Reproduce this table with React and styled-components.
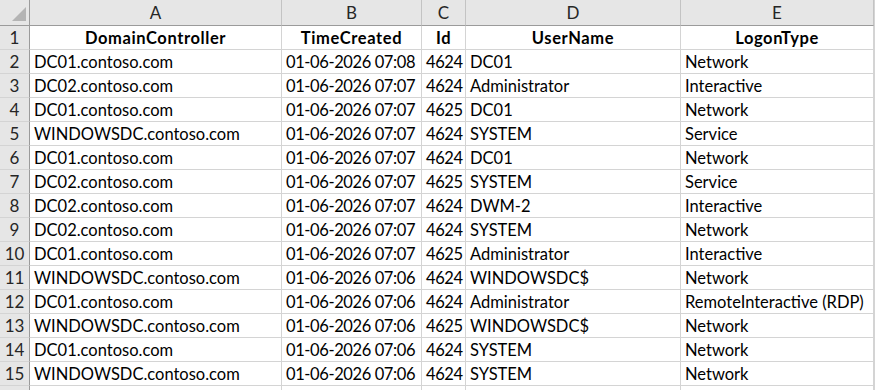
import React from 'react';
import styled, { createGlobalStyle } from 'styled-components';

const GlobalStyle = createGlobalStyle`
  html, body {
    margin: 0;
    padding: 0;
    background: #ffffff;
    overflow: hidden;
  }
`;

const Sheet = styled.div`
  display: grid;
  grid-template-columns: 30px 252px 140px 44px 215px 193px;
  grid-template-rows: 26px;
  grid-auto-rows: 24px;
  width: 874px;
  height: 390px;
  overflow: hidden;
  font-family: Lato, 'Open Sans', sans-serif;
  font-size: 16.5px;
  color: #000000;
  border-right: 1px solid #d4d4d4;
`;

const ColHead = styled.div`
  box-sizing: border-box;
  background: #e6e6e6;
  border-right: 1px solid #c3c3c3;
  border-bottom: 1px solid #9b9b9b;
  display: flex;
  align-items: center;
  justify-content: center;
  color: #262626;
  font-size: 17px;
  position: relative;
`;

const Corner = styled(ColHead)`
  border-right: 1px solid #9b9b9b;
`;

const CornerMark = styled.svg`
  position: absolute;
  right: 3px;
  bottom: 4px;
`;

const RowHead = styled.div`
  box-sizing: border-box;
  background: #e6e6e6;
  border-right: 1px solid #9b9b9b;
  border-bottom: 1px solid #d4d4d4;
  display: flex;
  align-items: center;
  justify-content: center;
  color: #262626;
  font-size: 17px;
`;

const Cell = styled.div`
  box-sizing: border-box;
  border-right: 1px solid #d4d4d4;
  border-bottom: 1px solid #d4d4d4;
  display: flex;
  align-items: center;
  justify-content: ${(p) => (p.$head ? 'center' : 'flex-start')};
  padding: 0 4px;
  font-weight: ${(p) => (p.$head ? 700 : 400)};
  letter-spacing: ${(p) => (p.$head ? '0.6px' : p.$numeric ? '-0.4px' : '0')};
  white-space: nowrap;
  overflow: hidden;
`;

const columns = ['A', 'B', 'C', 'D', 'E'];
const header = ['DomainController', 'TimeCreated', 'Id', 'UserName', 'LogonType'];
const numericCols = [1, 2];

const rows = [
  ['DC01.contoso.com', '01-06-2026 07:08', '4624', 'DC01', 'Network'],
  ['DC02.contoso.com', '01-06-2026 07:07', '4624', 'Administrator', 'Interactive'],
  ['DC01.contoso.com', '01-06-2026 07:07', '4625', 'DC01', 'Network'],
  ['WINDOWSDC.contoso.com', '01-06-2026 07:07', '4624', 'SYSTEM', 'Service'],
  ['DC01.contoso.com', '01-06-2026 07:07', '4624', 'DC01', 'Network'],
  ['DC02.contoso.com', '01-06-2026 07:07', '4625', 'SYSTEM', 'Service'],
  ['DC02.contoso.com', '01-06-2026 07:07', '4624', 'DWM-2', 'Interactive'],
  ['DC02.contoso.com', '01-06-2026 07:07', '4624', 'SYSTEM', 'Network'],
  ['DC01.contoso.com', '01-06-2026 07:07', '4625', 'Administrator', 'Interactive'],
  ['WINDOWSDC.contoso.com', '01-06-2026 07:06', '4624', 'WINDOWSDC$', 'Network'],
  ['DC01.contoso.com', '01-06-2026 07:06', '4624', 'Administrator', 'RemoteInteractive (RDP)'],
  ['WINDOWSDC.contoso.com', '01-06-2026 07:06', '4625', 'WINDOWSDC$', 'Network'],
  ['DC01.contoso.com', '01-06-2026 07:06', '4624', 'SYSTEM', 'Network'],
  ['WINDOWSDC.contoso.com', '01-06-2026 07:06', '4624', 'SYSTEM', 'Network'],
  ['', '', '', '', ''],
];

export default function App() {
  return (
    <>
      <GlobalStyle />
      <Sheet>
        <Corner>
          <CornerMark width="14" height="14" viewBox="0 0 14 14">
            <polygon points="14,0 14,14 0,14" fill="#b4b4b4" />
          </CornerMark>
        </Corner>
        {columns.map((c) => (
          <ColHead key={c}>{c}</ColHead>
        ))}

        <RowHead>1</RowHead>
        {header.map((h) => (
          <Cell key={h} $head>
            {h}
          </Cell>
        ))}

        {rows.map((r, i) => (
          <React.Fragment key={i}>
            <RowHead>{i < rows.length - 1 ? i + 2 : ''}</RowHead>
            {r.map((v, j) => (
              <Cell key={j} $numeric={numericCols.includes(j)}>
                {v}
              </Cell>
            ))}
          </React.Fragment>
        ))}
      </Sheet>
    </>
  );
}
